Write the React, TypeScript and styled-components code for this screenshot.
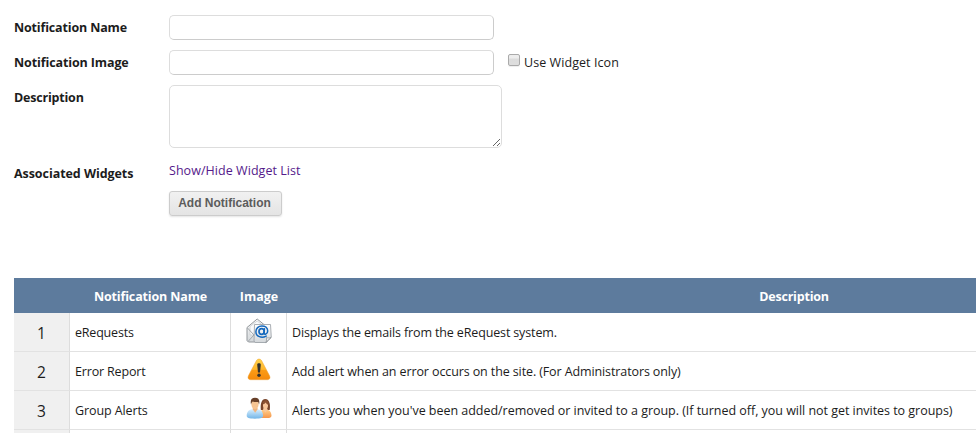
import React from "react";
import styled, { createGlobalStyle } from "styled-components";

const GlobalStyle = createGlobalStyle`
  * { box-sizing: border-box; }
  html, body { margin: 0; padding: 0; background: #fff; overflow: hidden; }
  body {
    font-family: "Open Sans", "Noto Sans", sans-serif;
    font-size: 12.5px;
    line-height: 18px;
    color: #1c1c1c;
  }
`;

const Page = styled.main`
  width: 976px;
  height: 433px;
  overflow: hidden;
  padding: 15px 0 0 14px;
`;

const Form = styled.form`
  display: flex;
  flex-direction: column;
`;

const FormRow = styled.div<{ $height: number }>`
  display: flex;
  align-items: flex-start;
  height: ${(p) => p.$height}px;
`;

const Label = styled.label<{ $spacing?: number }>`
  width: 155px;
  flex: none;
  padding-top: 4px;
  font-weight: 700;
  letter-spacing: ${(p) => p.$spacing ?? 0}px;
  white-space: nowrap;
`;

const TextInput = styled.input`
  width: 325px;
  height: 25px;
  flex: none;
  padding: 0 6px;
  border: 1px solid #ccc;
  border-top-color: #ddd;
  border-left-color: #ddd;
  border-radius: 5px;
  background: #fff;
  outline: none;
`;

const TextArea = styled.textarea`
  width: 333px;
  height: 63px;
  padding: 4px 6px;
  border: 1px solid #ddd;
  border-radius: 5px;
  background: #fff;
  resize: both;
  outline: none;
`;

const CheckLabel = styled.label`
  display: flex;
  align-items: flex-start;
  margin: 4px 0 0 14px;
  white-space: nowrap;
`;

const CheckBox = styled.input`
  appearance: none;
  width: 12px;
  height: 12px;
  margin: 0 4px 0 0;
  border: 1px solid #aaa;
  border-radius: 2px;
  background: linear-gradient(#ededed 30%, #dcdcdc 40%, #dedede);
  box-shadow: 0 1px 1px #eee;
`;

const Text = styled.span<{ $spacing?: number }>`
  letter-spacing: ${(p) => p.$spacing ?? 0}px;
  white-space: nowrap;
`;

const WidgetLink = styled.a`
  padding-top: 1px;
  color: #551a8b;
  letter-spacing: 0.05px;
  text-decoration: none;
  white-space: nowrap;
  cursor: pointer;
`;

const SubmitButton = styled.button`
  width: 113px;
  height: 25px;
  margin-left: 155px;
  padding: 0 2px 1px 0;
  border: 1px solid #ccc;
  border-radius: 3px;
  background: linear-gradient(#f1f1f1, #e4e4e4);
  box-shadow: 0 1px 2px #e4e4e4;
  color: #5c5c5c;
  font: 700 12px/16px "Liberation Sans", Arial, sans-serif;
  white-space: nowrap;
`;

const Table = styled.table`
  width: 1287px;
  margin-top: 62px;
  border-collapse: separate;
  border-spacing: 0;
  table-layout: fixed;
`;

const Column = styled.col<{ $width?: number }>`
  width: ${(p) => (p.$width ? `${p.$width}px` : "auto")};
`;

const HeadCell = styled.th`
  height: 35px;
  padding: 2px 0 0;
  background: #5d7b9d;
  color: #fff;
  font-weight: 700;
  text-align: center;
`;

const Cell = styled.td`
  height: 39px;
  padding: 2px 5px 0;
  border-right: 1px solid #ddd;
  border-bottom: 1px solid #e2e2e2;
  vertical-align: middle;
`;

const NumberCell = styled(Cell)`
  padding: 2px 0 0;
  background: #f0f0f0;
  font-size: 15.5px;
  font-weight: 400;
  text-align: center;
`;

const ImageCell = styled(Cell)`
  padding: 0 0 3px;
  text-align: center;
`;

const Icon = styled.svg`
  display: block;
  width: 26px;
  height: 26px;
  margin: 0 auto;
`;

const MailIcon = () => (
  <Icon viewBox="0 0 26 26">
    <defs>
      <linearGradient id="paper" x2="0" y2="1">
        <stop offset="0" stopColor="#fff" />
        <stop offset="1" stopColor="#d3d7da" />
      </linearGradient>
    </defs>
    <path d="M1 9.5 11.2 1 21 9v15H2.5L1 22.5z" fill="url(#paper)" stroke="#92979b" />
    <path d="M4 8.5 11.2 3l7 5.5V17H4z" fill="#f9fafb" stroke="#c6cacd" strokeWidth=".7" />
    <path d="m1.5 10 6.5 7-6 6.5M8 17l3-1" fill="none" stroke="#a1a6aa" />
    <path d="M8.5 6.5h16l.8 13-5.3 5H9.2L8 23z" fill="url(#paper)" stroke="#a0a6ab" strokeWidth=".9" />
    <path d="M25 19.5c-2 .7-3.5.5-4.5 0 .3 2 0 3.5-.8 5z" fill="#f6f6f6" stroke="#8f9498" strokeWidth=".8" />
    <g fill="none" stroke="#1468bd" strokeLinecap="round">
      <ellipse cx="15.6" cy="13.5" rx="2.6" ry="2.8" strokeWidth="1.7" />
      <path d="m18.5 10.7-.5 4.2c0 2.2 3.7 1.5 3.7-2 0-3.2-2.7-5-5.8-5-3.5 0-6 2.6-6 5.8 0 5 5.8 6.8 10.3 4.4" strokeWidth="1.5" />
    </g>
  </Icon>
);

const WarningIcon = () => (
  <Icon viewBox="0 0 26 26">
    <defs>
      <linearGradient id="amber" x2="0" y2="1">
        <stop offset="0" stopColor="#ffd34b" />
        <stop offset=".5" stopColor="#ffb62c" />
        <stop offset=".55" stopColor="#fb9b15" />
        <stop offset="1" stopColor="#f58a0c" />
      </linearGradient>
    </defs>
    <path
      d="M10.3 3.8c1.1-2.3 4.3-2.3 5.4 0l7.9 15c1 2.2.1 3.9-2.1 3.9h-17c-2.2 0-3.1-1.7-2.1-3.9z"
      fill="url(#amber)"
      stroke="#efa43a"
      strokeWidth=".5"
    />
    <path d="M11.2 7.7c0-1.8 3.6-1.8 3.6 0l-.8 7.8h-2z" fill="#34322d" />
    <circle cx="13" cy="18.2" r="1.7" fill="#34322d" />
  </Icon>
);

const PeopleIcon = () => (
  <Icon viewBox="0 0 26 26">
    <defs>
      <linearGradient id="blue" x2="0" y2="1">
        <stop offset="0" stopColor="#d9efff" />
        <stop offset="1" stopColor="#72b5e7" />
      </linearGradient>
      <linearGradient id="orange" x2="0" y2="1">
        <stop offset="0" stopColor="#ffd08d" />
        <stop offset="1" stopColor="#f5964b" />
      </linearGradient>
    </defs>
    <path d="M14.8 14c-.5-5 .2-11 4.5-11s5.2 6 4.4 11z" fill="#79452b" />
    <path d="M13 22c0-5.5 1.5-8.5 6.3-8.5 4 0 6 2 6.2 6.2 0 1.8-1.7 2.3-4 2.3z" fill="url(#orange)" />
    <path d="m17 13.5 2.5 3 2.2-3-1-2h-3z" fill="#f7c69d" />
    <ellipse cx="19.5" cy="9.2" rx="2.5" ry="3.8" fill="#f8c69b" />
    <path d="M16.8 8.5c.1-3 1.5-4.3 3.2-4.3 1.6 0 2.4 1.8 2.5 4.8-1.3-.4-2.3-1.4-2.8-2.4-.7 1-1.6 1.6-2.9 1.9z" fill="#8c5132" />
    <path d="M.7 19.8c0-4 2-6.1 5-6.6h6.6c3 .6 4.8 2.8 4.8 6.6 0 2-2 2.9-8.2 2.9S.7 21.8.7 19.8z" fill="url(#blue)" />
    <path d="m6.5 13 2.7 3.8 2.6-3.8-1-2H7.5z" fill="#f0b47f" />
    <ellipse cx="9" cy="8.4" rx="3.6" ry="4.8" fill="#f6c492" />
    <path d="M5 8.4C4 3.6 5.7 1.8 9 1.8c3.7 0 5 2.4 4.1 6.6l-.9-2.5c-2 .3-4 .1-5.4-.5C5.8 6 5.5 7.2 5 8.4z" fill="#673f28" />
  </Icon>
);

const rows = [
  { name: "eRequests", icon: <MailIcon />, nameSpacing: -0.2, spacing: -0.14, description: "Displays the emails from the eRequest system." },
  { name: "Error Report", icon: <WarningIcon />, nameSpacing: -0.17, spacing: -0.11, description: "Add alert when an error occurs on the site. (For Administrators only)" },
  { name: "Group Alerts", icon: <PeopleIcon />, nameSpacing: -0.1, spacing: -0.03, description: "Alerts you when you've been added/removed or invited to a group. (If turned off, you will not get invites to groups)" },
  { name: "", icon: null, nameSpacing: 0, spacing: 0, description: "" },
];

export default function App() {
  return (
    <>
      <GlobalStyle />
      <Page>
        <Form>
          <FormRow $height={35}>
            <Label htmlFor="name" $spacing={-0.16}>Notification Name</Label>
            <TextInput id="name" />
          </FormRow>
          <FormRow $height={35}>
            <Label htmlFor="image" $spacing={-0.11}>Notification Image</Label>
            <TextInput id="image" />
            <CheckLabel>
              <CheckBox type="checkbox" />
              <Text $spacing={0.07}>Use Widget Icon</Text>
            </CheckLabel>
          </FormRow>
          <FormRow $height={76}>
            <Label htmlFor="description" $spacing={-0.2}>Description</Label>
            <TextArea id="description" />
          </FormRow>
          <FormRow $height={30}>
            <Label as="span" $spacing={-0.06}>Associated Widgets</Label>
            <WidgetLink>Show/Hide Widget List</WidgetLink>
          </FormRow>
          <SubmitButton type="button">Add Notification</SubmitButton>
        </Form>
        <Table>
          <colgroup>
            <Column $width={56} />
            <Column $width={161} />
            <Column $width={56} />
            <Column />
          </colgroup>
          <thead>
            <tr>
              <HeadCell />
              <HeadCell><Text $spacing={-0.14}>Notification Name</Text></HeadCell>
              <HeadCell><Text>Image</Text></HeadCell>
              <HeadCell><Text $spacing={-0.2}>Description</Text></HeadCell>
            </tr>
          </thead>
          <tbody>
            {rows.map((row, i) => (
              <tr key={i}>
                <NumberCell>{row.name ? i + 1 : ""}</NumberCell>
                <Cell><Text $spacing={row.nameSpacing}>{row.name}</Text></Cell>
                <ImageCell>{row.icon}</ImageCell>
                <Cell><Text $spacing={row.spacing}>{row.description}</Text></Cell>
              </tr>
            ))}
          </tbody>
        </Table>
      </Page>
    </>
  );
}
